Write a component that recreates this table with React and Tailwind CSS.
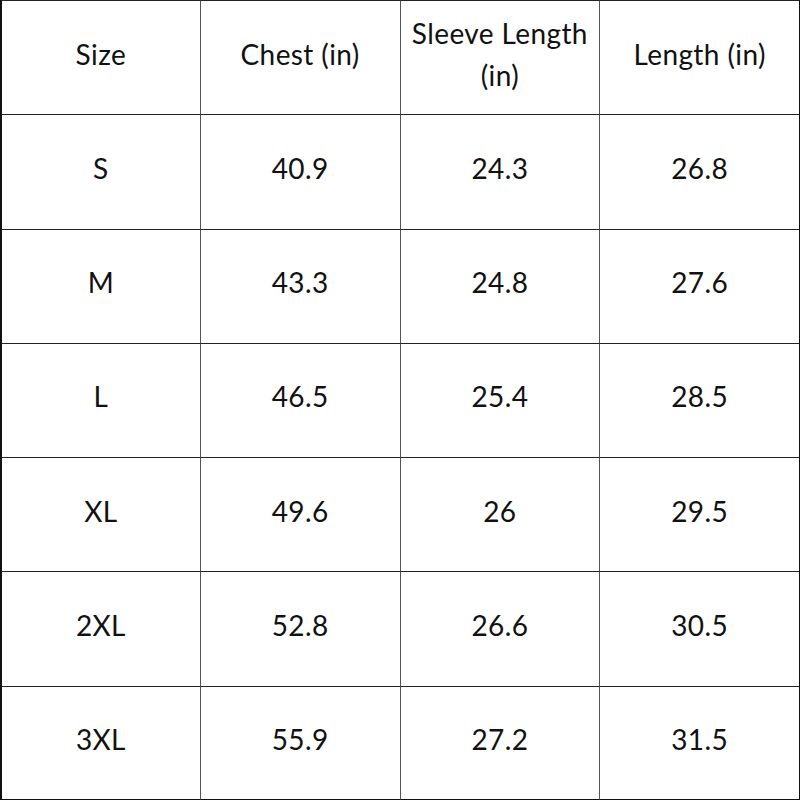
const headers = ["Size", "Chest (in)", "Sleeve Length (in)", "Length (in)"];

const rows = [
  ["S", "40.9", "24.3", "26.8"],
  ["M", "43.3", "24.8", "27.6"],
  ["L", "46.5", "25.4", "28.5"],
  ["XL", "49.6", "26", "29.5"],
  ["2XL", "52.8", "26.6", "30.5"],
  ["3XL", "55.9", "27.2", "31.5"]
];

function Cell({ children, first, lastRow }) {
  return (
    <div
      className={`flex items-center justify-center text-center pb-2 border-t border-[#222] ${first ? "border-l-2 border-l-[#111]" : "border-l border-l-[#555]"} ${lastRow ? "border-b border-b-[#111]" : ""}`}
    >
      <span className="px-2 leading-[42px]">{children}</span>
    </div>
  );
}

export default function App() {
  return (
    <div className="w-[800px] h-[800px] bg-white">
      <div
        className="grid grid-cols-4 grid-rows-7 w-[800px] h-[800px] border-r border-r-[#111] text-[28px] tracking-[0.4px] text-[#111]"
        style={{ fontFamily: "Lato, 'Noto Sans', sans-serif" }}
      >
        {headers.map((h, i) => (
          <Cell key={h} first={i === 0}>
            {h}
          </Cell>
        ))}
        {rows.map((row, r) =>
          row.map((v, c) => (
            <Cell key={`${r}-${c}`} first={c === 0} lastRow={r === rows.length - 1}>
              {v}
            </Cell>
          ))
        )}
      </div>
    </div>
  );
}
